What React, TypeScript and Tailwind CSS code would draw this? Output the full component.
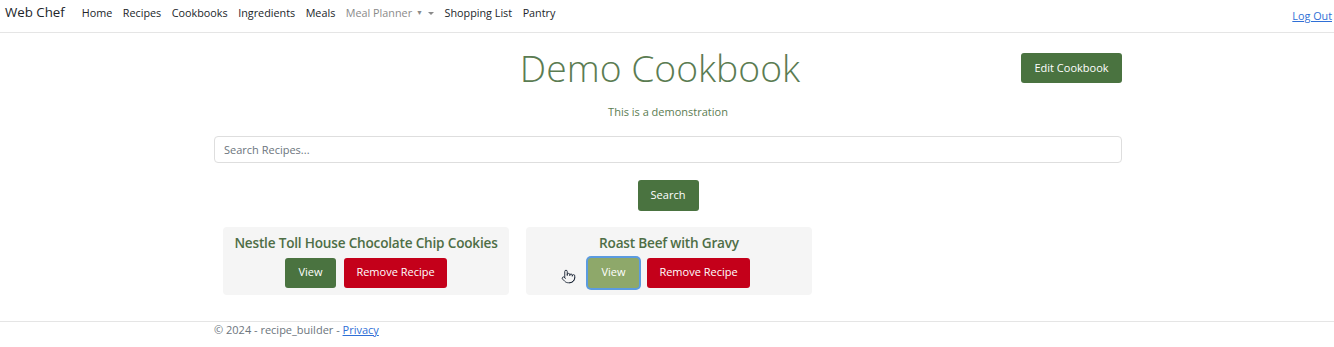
import React from 'react';
import { Pointer } from 'lucide-react';

const font = { fontFamily: '"Open Sans", "Noto Sans", sans-serif' };

const navLinks = ['Home', 'Recipes', 'Cookbooks', 'Ingredients', 'Meals'];

const RecipeCard: React.FC<{ title: string; hovered?: boolean }> = ({ title, hovered }) => (
  <div className="relative w-[286px] h-[68px] bg-[#f5f5f5] rounded flex flex-col items-center pt-[7px]">
    <h5 className="text-[13.6px] font-semibold text-[#4e6e46] leading-[18px] tracking-[-0.2px]">{title}</h5>
    <div className="flex gap-[8px] mt-[6px]">
      <button
        className={
          hovered
            ? 'w-[51px] h-[30px] rounded-[3px] bg-[#8ea86a] text-white text-[11px] ring-2 ring-[#5b9be0]'
            : 'w-[51px] h-[30px] rounded-[3px] bg-[#4a7340] text-white text-[11px]'
        }
      >
        View
      </button>
      <button className="w-[103px] h-[30px] rounded-[3px] bg-[#c4001a] text-white text-[11px]">Remove Recipe</button>
    </div>
    {hovered && (
      <Pointer className="absolute left-[35px] top-[42px] w-[15px] h-[15px] text-gray-800" strokeWidth={1.5} />
    )}
  </div>
);

export default function App() {
  return (
    <div className="w-[1334px] h-[347px] bg-white text-[#212529] overflow-hidden" style={font}>
      {/* Navbar */}
      <nav className="h-[33px] border-b border-[#e5e5e5] flex items-center pl-[5px] pr-[2px]">
        <span className="text-[13.3px] mr-[17px] -mt-[6px]">Web Chef</span>
        <ul className="flex items-center gap-[10.5px] text-[10.8px] -mt-[6px] flex-1">
          {navLinks.map((l) => (
            <li key={l}>{l}</li>
          ))}
          <li className="text-[#8a8a8a] flex items-center gap-[2px]">
            Meal Planner
            <span className="text-[7px] ml-[2px]">▼</span>
            <span className="ml-[3px] inline-block w-0 h-0 border-l-[3px] border-r-[3px] border-t-[3px] border-l-transparent border-r-transparent border-t-[#8a8a8a]"></span>
          </li>
          <li>Shopping List</li>
          <li>Pantry</li>
        </ul>
        <a href="#" className="text-[10.8px] text-[#2f6fd6] underline">Log Out</a>
      </nav>

      {/* Main */}
      <main className="w-[908px] ml-[214px]">
        <div className="grid grid-cols-[1fr_auto_1fr] items-start pt-[14px]">
          <div></div>
          <h1 className="text-[37.3px] font-light text-[#5b7c52] leading-[42px] pr-[16px]">Demo Cookbook</h1>
          <div className="flex justify-end pt-[6px]">
            <button className="h-[30px] w-[101px] rounded-[3px] bg-[#4a7340] text-white text-[11px]">Edit Cookbook</button>
          </div>
        </div>
        <p className="text-center text-[11px] text-[#5b7c52] mt-[15px]">This is a demonstration</p>

        <input
          placeholder="Search Recipes..."
          className="mt-[15px] w-full h-[27px] border border-[#dedede] rounded-[4px] px-[9px] text-[11px] placeholder-[#6c757d] outline-none"
        />
        <div className="flex justify-center mt-[17px]">
          <button className="h-[31px] w-[61px] rounded-[3px] bg-[#4a7340] text-white text-[11px]">Search</button>
        </div>

        <div className="flex gap-[17px] pl-[9px] mt-[16px]">
          <RecipeCard title="Nestle Toll House Chocolate Chip Cookies" />
          <RecipeCard title="Roast Beef with Gravy" hovered />
        </div>
      </main>

      {/* Footer */}
      <footer className="mt-[26px] border-t border-[#e5e5e5] pl-[214px] text-[11px] text-[#6c757d]">
        © 2024 - recipe_builder - <a href="#" className="text-[#2f6fd6] underline">Privacy</a>
      </footer>
    </div>
  );
}
